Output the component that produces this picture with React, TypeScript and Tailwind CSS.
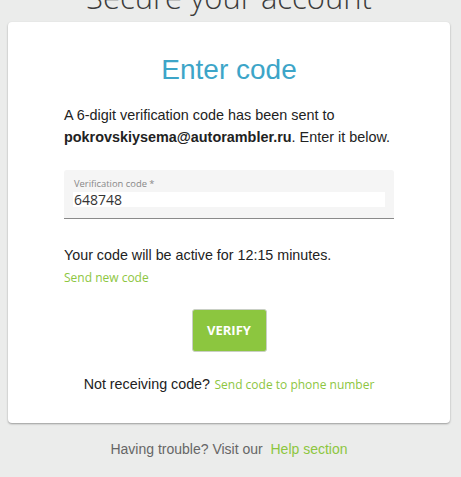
import React from "react";

export default function App() {
  return (
    <div className="min-h-[477px] w-full overflow-hidden bg-[#ebeceb] font-['Liberation_Sans',Arial,sans-serif]">
      <div className="ml-[8px] w-[442px]">
        <h1 className="mt-[-23px] h-[40px] whitespace-nowrap text-center font-['Open_Sans',sans-serif] text-[31px] font-light leading-[40px] text-[#3c3c3c]">
          Secure your account
        </h1>
        <div className="mt-[5px] rounded-[4px] bg-white px-[56px] pt-[30px] pb-[27px] shadow-[0_1px_2px_rgba(0,0,0,0.35)]">
          <h2 className="text-center text-[28px] leading-[36px] text-[#3da5c8]">Enter code</h2>
          <p className="mt-[16px] text-[14.4px] leading-[22px] text-[#222]">
            A 6-digit verification code has been sent to{" "}
            <span className="font-bold">pokrovskiysema@autorambler.ru</span>. Enter it below.
          </p>
          <div className="mt-[22px] flex h-[49px] flex-col rounded-t-[3px] border-b border-[#8a8a8a] bg-[#f5f5f5] px-[9px] pt-[7px]">
            <div className="pl-[1px] font-['Open_Sans',sans-serif] text-[9.4px] leading-[13px] text-[#888]">
              Verification code *
            </div>
            <div className="mt-[2px] h-[15px] bg-white pl-[1px] font-['Open_Sans',sans-serif] text-[14px] leading-[15px] text-[#333]">
              648748
            </div>
          </div>
          <p className="mt-[25px] text-[14.3px] leading-[22px] text-[#222]">
            Your code will be active for 12:15 minutes.
          </p>
          <div className="mt-[4px] font-['Open_Sans',sans-serif] text-[12px] leading-[16px] text-[#8dc63f]">
            Send new code
          </div>
          <div className="mt-[23px] flex justify-center">
            <button className="h-[43px] w-[75px] rounded-[3px] border border-[#c9cfc4] bg-[#8cc63f] font-['Open_Sans',sans-serif] text-[13px] font-bold text-white">
              VERIFY
            </button>
          </div>
          <p className="mt-[21px] text-center leading-[22px]">
            <span className="text-[14.3px] text-[#222]">Not receiving code?</span>{" "}
            <span className="font-['Open_Sans',sans-serif] text-[12px] text-[#8dc63f]">
              Send code to phone number
            </span>
          </p>
        </div>
        <p className="mt-[15px] text-center text-[14px] leading-[22px] text-[#666]">
          Having trouble? Visit our&nbsp;&nbsp;<span className="text-[#8dc63f]">Help section</span>
        </p>
      </div>
    </div>
  );
}
